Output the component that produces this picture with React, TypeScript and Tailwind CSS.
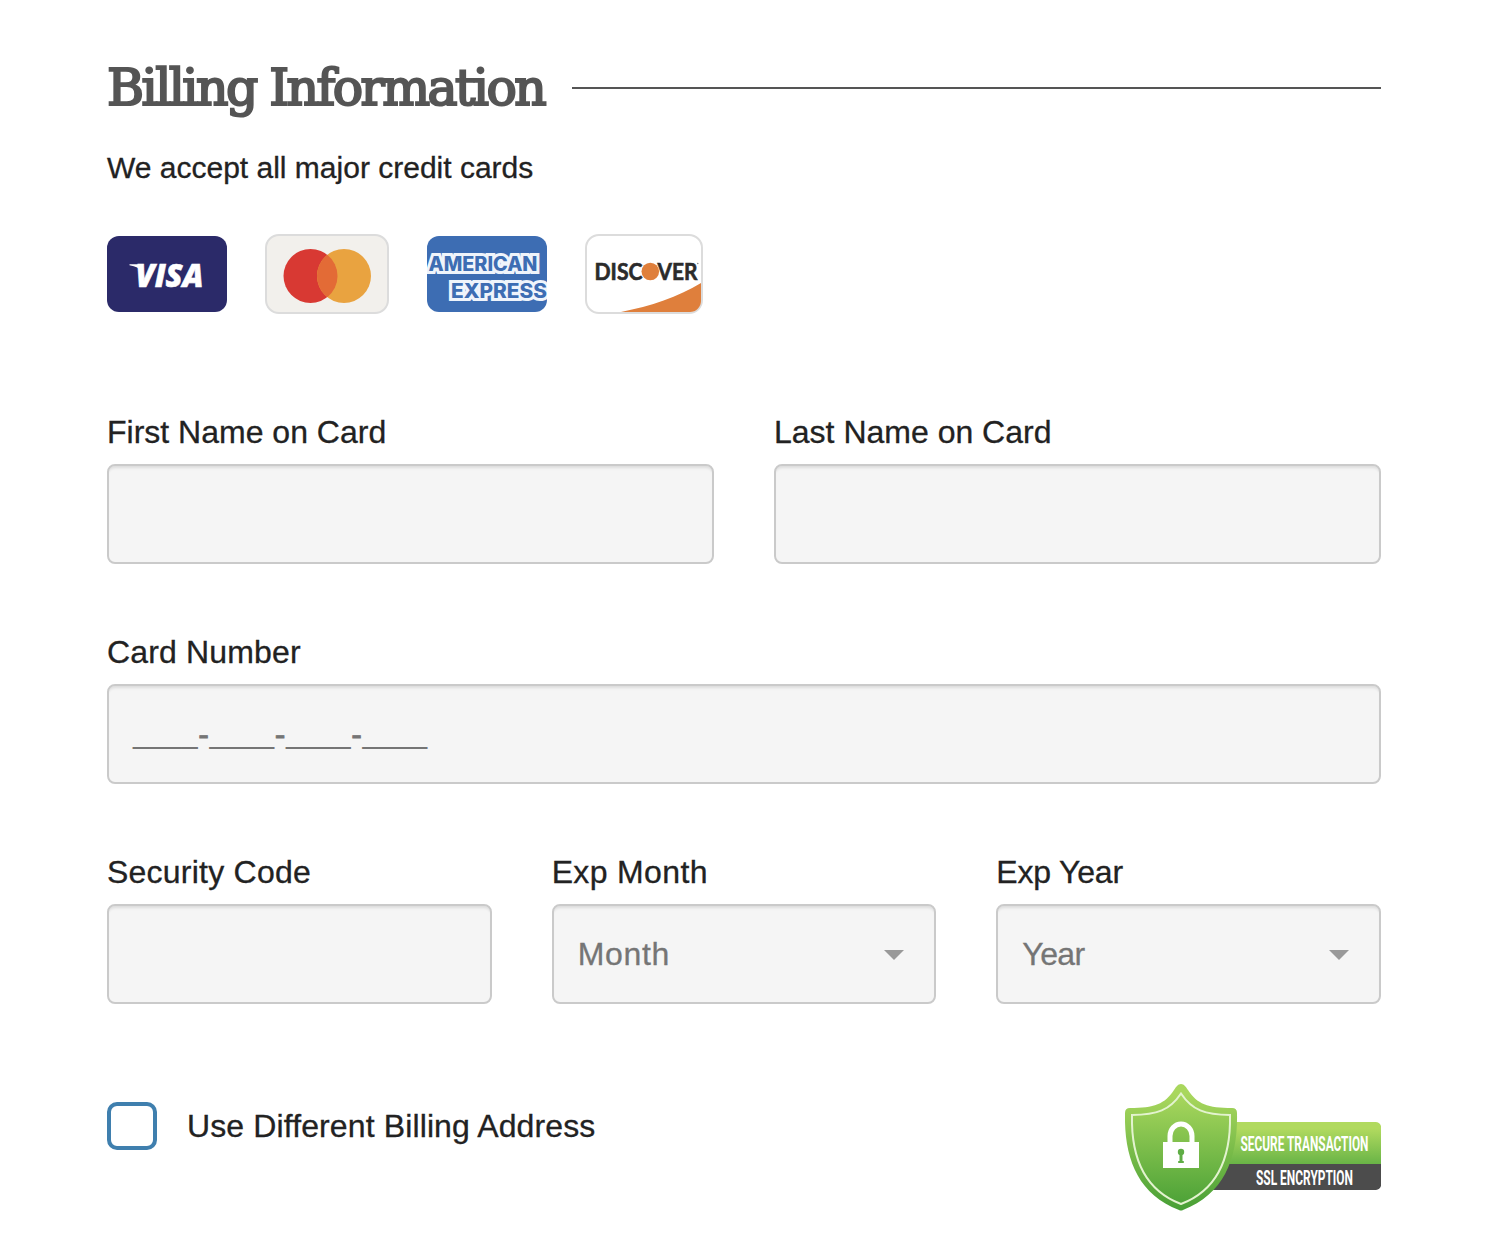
import type { ReactNode } from "react";

const control =
  "h-[100px] w-full rounded-lg border-2 border-[#cacaca] bg-[#f5f5f5] shadow-[inset_0_4px_3px_-2px_rgba(10,10,10,0.1)] outline-none";

function VisaCard() {
  return (
    <svg width="120" height="76" viewBox="0 0 120 76" role="img" aria-label="Visa">
      <rect width="120" height="76" rx="12" fill="#2b2a69" />
      <path d="M22.500 28.200h11l4 16-3.500-9q-2-4.500-11.500-6z" fill="#fff" />
      <text x="28.500" y="51.300" fontFamily="Open Sans, sans-serif" fontSize="32" fontWeight="800" fontStyle="italic" fill="#fff" stroke="#fff" strokeWidth="0.600" textLength="68" lengthAdjust="spacingAndGlyphs">
        VISA
      </text>
    </svg>
  );
}

function MasterCard() {
  return (
    <svg width="124" height="80" viewBox="0 0 124 80" role="img" aria-label="Mastercard">
      <rect x="1" y="1" width="122" height="78" rx="13" fill="#f2f0ec" stroke="#dcdcdc" strokeWidth="2" />
      <circle cx="45.500" cy="42" r="27" fill="#d83933" />
      <circle cx="79" cy="42" r="27" fill="#e9a340" />
      <path d="M62.250 20.800a27 27 0 0 1 0 42.400a27 27 0 0 1 0-42.400z" fill="#e36b36" />
    </svg>
  );
}

function AmexCard() {
  return (
    <svg width="120" height="76" viewBox="0 0 120 76" role="img" aria-label="American Express">
      <clipPath id="amex">
        <rect width="120" height="76" rx="12" />
      </clipPath>
      <g clipPath="url(#amex)" fontFamily="Inter, sans-serif" fontSize="19.500" fontWeight="800" fill="#3d6db3" stroke="#eff4fb" strokeWidth="6" strokeLinejoin="miter" paintOrder="stroke">
        <rect width="120" height="76" stroke="none" />
        <text x="1.500" y="34.500" textLength="109" lengthAdjust="spacingAndGlyphs">AMERICAN</text>
        <text x="24" y="61.500" textLength="96" lengthAdjust="spacingAndGlyphs">EXPRESS</text>
      </g>
    </svg>
  );
}

function DiscoverCard() {
  return (
    <svg width="118" height="80" viewBox="0 0 118 80" role="img" aria-label="Discover">
      <clipPath id="discover">
        <rect x="2" y="2" width="114" height="76" rx="11" />
      </clipPath>
      <rect x="1" y="1" width="116" height="78" rx="13" fill="#fff" stroke="#dcdcdc" strokeWidth="2" />
      <path d="M36 78C66 72 93 63 116 49V78z" fill="#df7f3c" clipPath="url(#discover)" />
      <g fontFamily="Lato, sans-serif" fontSize="23" fontWeight="700" fill="#2b2b2b" stroke="#2b2b2b" strokeWidth="0.600">
        <text x="9.500" y="45.600" textLength="48" lengthAdjust="spacingAndGlyphs">DISC</text>
        <text x="72.500" y="45.600" textLength="40" lengthAdjust="spacingAndGlyphs">VER</text>
      </g>
      <circle cx="65.300" cy="37.500" r="8.800" fill="#df7f3c" />
      <circle cx="112.800" cy="29.500" r="0.700" fill="#777" />
    </svg>
  );
}

function SecureBadge() {
  return (
    <svg width="256" height="128" viewBox="0 0 256 128" role="img" aria-label="Secure transaction, SSL encryption">
      <defs>
        <linearGradient id="bar" x1="0" y1="0" x2="0" y2="1">
          <stop offset="0.150" stopColor="#b1da5f" />
          <stop offset="1" stopColor="#67b346" />
        </linearGradient>
        <linearGradient id="shield" x1="0" y1="0" x2="0" y2="1">
          <stop offset="0.080" stopColor="#a9d75d" />
          <stop offset="1" stopColor="#479f35" />
        </linearGradient>
      </defs>
      <path d="M88 38H250a6 6 0 0 1 6 4V81H88z" fill="url(#bar)" />
      <path d="M80 80H256V102a6 6 0 0 1-5 4H80z" fill="#4c4c4c" />
      <path d="M56 0C59 0 61 3 63 6C72 20 83 24 107 24Q112 24 112 29C113 73 100 110 58 126Q56 127 54 126C12 110-1 73 0 29Q0 24 5 24C29 24 40 20 49 6C51 3 53 0 56 0z" fill="url(#shield)" />
      <path d="M56 9.500C67 26 80 31 105 31C106 74 93 106 56 120C19 106 6 74 7 31C32 31 45 26 56 9.500z" fill="none" stroke="#e3f3cf" strokeWidth="2" />
      <path d="M45 59V52a11 12 0 0 1 22 0V59" fill="none" stroke="#fff" strokeWidth="5" />
      <rect x="38" y="58" width="36" height="26" fill="#fff" />
      <circle cx="56" cy="68" r="3.200" fill="#5fad45" />
      <path d="M54.500 69h3v8h1.300v2h-5.600v-2h1.300z" fill="#5fad45" />
      <g fontFamily="Roboto, sans-serif" fontSize="11" fontWeight="700" fill="#fff">
        <text transform="translate(115.500 66.500) scale(1 1.800)" textLength="128" lengthAdjust="spacingAndGlyphs">SECURE TRANSACTION</text>
        <text transform="translate(131 100.500) scale(1 1.800)" textLength="97" lengthAdjust="spacingAndGlyphs">SSL ENCRYPTION</text>
      </g>
    </svg>
  );
}

function Field({ label, tracking = "", children }: { label: string; tracking?: string; children: ReactNode }) {
  return (
    <label className="flex min-w-0 flex-1 flex-col gap-3">
      <span className={`text-[32px] leading-10 whitespace-nowrap ${tracking}`}>{label}</span>
      {children}
    </label>
  );
}

function Dropdown({ text, tracking }: { text: string; tracking: string }) {
  return (
    <button type="button" className={`${control} flex items-center justify-between pr-[30px] pl-6 text-[#757575]`}>
      <span className={`text-[32px] leading-10 ${tracking}`}>{text}</span>
      <svg width="20" height="10" viewBox="0 0 20 10" className="mt-0.5" aria-hidden="true">
        <path d="M0 0h20L10 10z" fill="#999" />
      </svg>
    </button>
  );
}

function CardMask() {
  return (
    <div className={`${control} flex items-center pl-6 text-[29px] text-[#757575] [-webkit-text-stroke:0]`}>
      {[0, 1, 2, 3].map((i) => (
        <span key={i} className="flex">
          {i > 0 && <span className="w-3 text-center text-[32px] [-webkit-text-stroke:0.8px_#757575]">-</span>}
          <span className="w-[64.500px] self-center">____</span>
        </span>
      ))}
    </div>
  );
}

export default function App() {
  return (
    <main className="min-h-[1250px] bg-white pt-[58px] pr-[131px] pl-[107px] font-['Liberation_Sans',Arial,sans-serif] text-[#222] [-webkit-text-stroke:0.3px]">
      <header className="flex h-[60px] items-center">
        <h1 className="w-[465px] shrink-0 font-['DejaVu_Serif',serif] text-[50.500px] leading-[60px] tracking-[-2.550px] whitespace-nowrap text-[#555] [-webkit-text-stroke:2.2px_#555]">
          Billing Information
        </h1>
        <div className="h-0.5 flex-1 bg-[#555]" />
      </header>
      <p className="mt-[30px] text-[30px] leading-10">We accept all major credit cards</p>
      <div className="mt-[46px] flex h-20 items-center gap-[38px] [-webkit-text-stroke:0]">
        <VisaCard />
        <MasterCard />
        <AmexCard />
        <DiscoverCard />
      </div>
      <form className="mt-[98px] flex flex-col gap-[68px]">
        <div className="flex gap-[60px]">
          <Field label="First Name on Card">
            <input className={`${control} px-6 text-[32px]`} />
          </Field>
          <Field label="Last Name on Card">
            <input className={`${control} px-6 text-[32px]`} />
          </Field>
        </div>
        <Field label="Card Number" tracking="tracking-[0.15px]">
          <CardMask />
        </Field>
        <div className="flex gap-[60px]">
          <Field label="Security Code" tracking="tracking-[0.23px]">
            <input className={`${control} px-6 text-[32px]`} />
          </Field>
          <Field label="Exp Month" tracking="tracking-[0.35px]">
            <Dropdown text="Month" tracking="tracking-[0.7px]" />
          </Field>
          <Field label="Exp Year" tracking="tracking-[-0.2px]">
            <Dropdown text="Year" tracking="tracking-[-0.6px]" />
          </Field>
        </div>
      </form>
      <footer className="mt-20 flex items-start justify-between">
        <label className="mt-[18px] flex items-center gap-[30px]">
          <input type="checkbox" className="h-12 w-[50px] appearance-none rounded-[10px] border-4 border-[#3f7fae] bg-white" />
          <span className="text-[32px] leading-10 tracking-[0.12px]">Use Different Billing Address</span>
        </label>
        <SecureBadge />
      </footer>
    </main>
  );
}
